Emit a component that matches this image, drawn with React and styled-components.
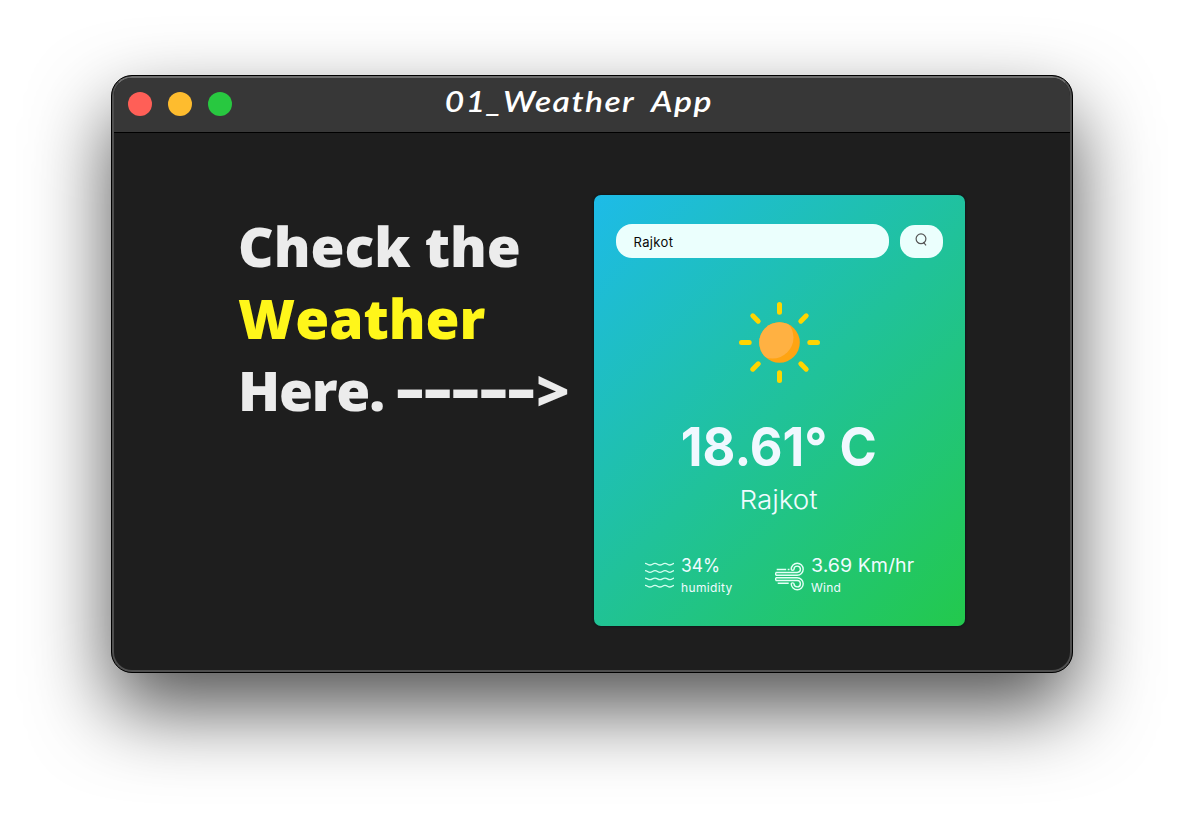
import React from "react";
import styled, { createGlobalStyle } from "styled-components";

const GlobalStyle = createGlobalStyle`
  * { box-sizing: border-box; }
  body { margin: 0; background: #fff; }
`;

const Stage = styled.main`
  width: 1184px;
  height: 820px;
  padding: 75px 0 0 111px;
  overflow: hidden;
  background: #fff;
`;

const Window = styled.section`
  display: flex;
  flex-direction: column;
  width: 962px;
  height: 598px;
  overflow: hidden;
  border: 1px solid #000;
  border-radius: 21px;
  background: #1e1e1e;
  box-shadow: 0 36px 80px rgba(0, 0, 0, 0.68);
`;

const Frame = styled.div`
  display: flex;
  flex-direction: column;
  flex: 1;
  border: 2px solid #4f4f4f;
  border-top-color: #6e6e6e;
  border-radius: 20px;
  overflow: hidden;
`;

const TitleBar = styled.header`
  display: grid;
  grid-template-columns: 104px 1fr 104px;
  align-items: center;
  height: 55px;
  padding: 0 14px 2px;
  border-bottom: 1px solid #000;
  background: #373737;
`;

const Lights = styled.div`
  display: flex;
  gap: 16px;
`;

const Light = styled.span`
  width: 24px;
  height: 24px;
  border-radius: 50%;
  background: ${(p) => p.$color};
`;

const Title = styled.h1`
  margin: 0;
  padding: 0 22px 6px 0;
  color: #fff;
  font: italic 600 28px/40px Lato, sans-serif;
  letter-spacing: 1.2px;
  word-spacing: 7px;
  text-align: center;
  white-space: pre;
  transform: scaleX(1.2);
`;

const Body = styled.div`
  display: flex;
  padding: 62px 0 0 124px;
`;

const Headline = styled.h2`
  width: 356px;
  flex: none;
  margin: 15px 0 0;
  color: #ececec;
  font: 800 55px/72px "Open Sans", sans-serif;
  white-space: nowrap;
`;

const Line = styled.span`
  display: block;
  width: max-content;
  color: ${(p) => p.$color || "inherit"};
`;

const ArrowLine = styled(Line)`
  display: flex;
`;

const Word = styled.span`
  width: 158px;
  letter-spacing: -1.2px;
`;

const Shaft = styled.span`
  width: 140px;
  transform: translateY(-2px) scaleX(1.59);
  transform-origin: left;
`;

const Head = styled.span`
  transform: scaleX(1.05);
  transform-origin: left;
`;

const Card = styled.article`
  display: flex;
  flex-direction: column;
  align-items: center;
  width: 371px;
  height: 431px;
  padding: 29px 1px 0 0;
  border-radius: 7px;
  background: linear-gradient(135deg, #1dbbe8 0%, #23c94c 100%);
  box-shadow: 0 0 2px 1px #101a1c;
  color: #f0fbff;
  font-family: Inter, sans-serif;
`;

const Search = styled.div`
  display: flex;
  align-items: center;
  gap: 11px;
`;

const Field = styled.div`
  width: 273px;
  height: 34px;
  padding-left: 18px;
  border-radius: 16px;
  background: #ebfffd;
  color: #080808;
  font-size: 13px;
  letter-spacing: 0.35px;
  line-height: 36px;
`;

const SearchButton = styled.button`
  display: flex;
  justify-content: center;
  width: 43px;
  height: 33px;
  padding: 8px 0 0;
  border: 0;
  border-radius: 15px;
  background: #ebfffd;
`;

const SunIcon = styled.svg`
  display: block;
  margin-top: 42px;
`;

const Temperature = styled.div`
  margin-top: 28px;
  color: #f0f8ff;
  font-size: 54px;
  font-weight: 700;
  line-height: 70px;
  white-space: nowrap;
  transform: scaleX(0.935);
`;

const City = styled.div`
  font-size: 26px;
  font-weight: 300;
  line-height: 36px;
  transform: scaleX(1.07);
`;

const Stats = styled.div`
  display: grid;
  grid-template-columns: 130px 140px;
  width: 270px;
  margin-top: 36px;
`;

const Stat = styled.div`
  display: flex;
  align-items: flex-start;
  gap: 7px;
`;

const StatIcon = styled.svg`
  flex: none;
  margin-top: 7px;
`;

const Value = styled.div`
  font-size: 18.5px;
  line-height: 24px;
  white-space: nowrap;
  transform: translateY(-1px) scaleX(${(p) => p.$stretch});
  transform-origin: left;
`;

const Label = styled.div`
  font-size: 12px;
  line-height: 20px;
  letter-spacing: ${(p) => p.$spacing || 0}px;
`;

const waveRows = [3, 10.3, 17.7, 25];
const rayAngles = [0, 90, 180, 270];

export default function App() {
  return (
    <Stage>
      <GlobalStyle />
      <Window>
        <Frame>
          <TitleBar>
            <Lights>
              <Light $color="#ff5f57" />
              <Light $color="#febc2e" />
              <Light $color="#28c840" />
            </Lights>
            <Title>01_Weather App</Title>
          </TitleBar>
          <Body>
            <Headline>
              <Line>Check the</Line>
              <Line $color="#fff61a">Weather</Line>
              <ArrowLine>
                <Word>Here.</Word>
                <Shaft>-----</Shaft>
                <Head>&gt;</Head>
              </ArrowLine>
            </Headline>
            <Card>
              <Search>
                <Field>Rajkot</Field>
                <SearchButton aria-label="Search">
                  <svg width="13" height="14" viewBox="0 0 13 14" fill="none" stroke="#555" strokeWidth="1.2">
                    <circle cx="6" cy="5.8" r="4.9" />
                    <path d="M8.3 9 11 12.4" />
                  </svg>
                </SearchButton>
              </Search>
              <SunIcon width="84" height="84" viewBox="-42.5 -42.5 84 84">
                <clipPath id="sun-disc">
                  <circle r="20.3" />
                </clipPath>
                <g stroke="#ffd500" strokeWidth="5" strokeLinecap="round">
                  {rayAngles.map((a) => (
                    <g key={a} transform={`rotate(${a})`}>
                      <path d="M0-38V-30.3M21.3-21.3 26.7-26.7" />
                    </g>
                  ))}
                </g>
                <circle r="20.3" fill="#ffa412" />
                <circle cx="-7" cy="-5" r="21" fill="#ffb142" clipPath="url(#sun-disc)" />
              </SunIcon>
              <Temperature>18.61° C</Temperature>
              <City>Rajkot</City>
              <Stats>
                <Stat>
                  <StatIcon width="30" height="29" viewBox="-.5 0 30 29" fill="none" stroke="#d5fff0" strokeWidth="1.3">
                    {waveRows.map((y) => (
                      <path key={y} d={`M.5 ${y - 0.6}C3 ${y - 0.6} 3 ${y + 1} 5.5 ${y + 1}S8 ${y - 0.6} 10.5 ${y - 0.6} 13 ${y + 1} 15.5 ${y + 1} 18 ${y - 0.6} 20.5 ${y - 0.6} 23 ${y + 1} 25.5 ${y + 1} 28 ${y - 0.6} 29.5 ${y - 0.6}`} />
                    ))}
                  </StatIcon>
                  <div>
                    <Value $stretch={0.94}>34%</Value>
                    <Label $spacing={0.35}>humidity</Label>
                  </div>
                </Stat>
                <Stat>
                  <StatIcon width="30" height="30" viewBox="-.7 0 30 30" fill="none" stroke="#e5fff6" strokeWidth="1.4">
                    <path d="M2 8.5H11.5M13 8.5H14.8M1 11.5H22.5A3.2 3.2 0 1 0 19.3 8.2M1 14.3H22.5A6 6 0 1 0 16.5 8.2C16.5 9.5 19.3 9.5 19.3 8.2M1 11.5V14.3M1 16.7H22.5A6 6 0 1 1 16.5 22.8C16.5 21.5 19.3 21.5 19.3 22.8M1 19.5H22.5A3.2 3.2 0 1 1 19.3 22.8M1 16.7V19.5M3 22.3H14" />
                  </StatIcon>
                  <div>
                    <Value $stretch={1.06}>3.69 Km/hr</Value>
                    <Label $spacing={0.2}>Wind</Label>
                  </div>
                </Stat>
              </Stats>
            </Card>
          </Body>
        </Frame>
      </Window>
    </Stage>
  );
}
